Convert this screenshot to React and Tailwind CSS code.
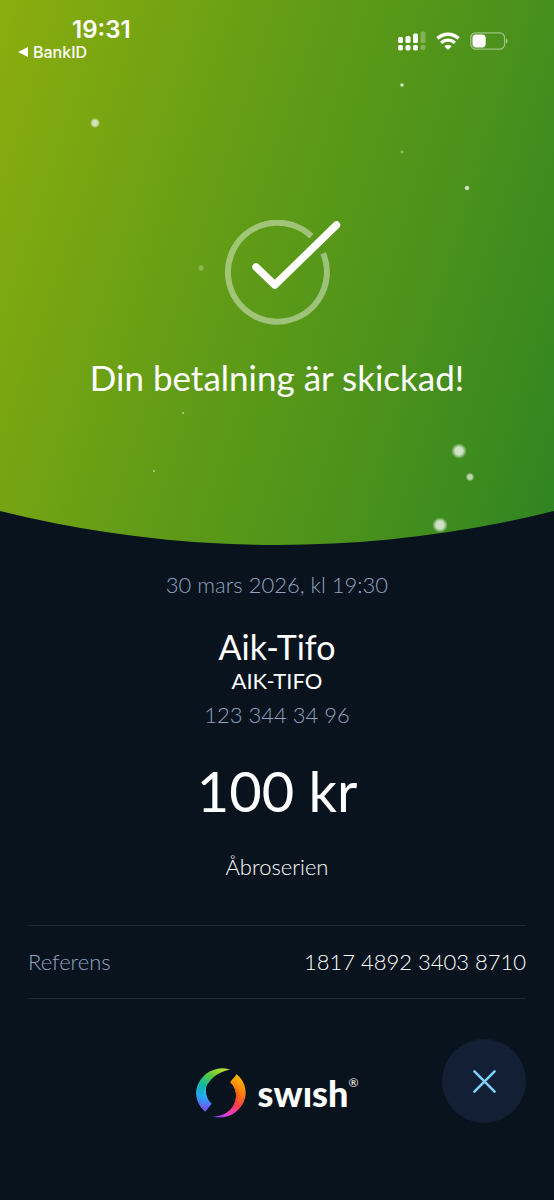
import React from 'react';

const sparkles = [
  { x: 95, y: 123, r: 4, opacity: 0.7 },
  { x: 402, y: 85, r: 1.2, opacity: 0.75 },
  { x: 402, y: 152, r: 1, opacity: 0.35 },
  { x: 467, y: 188, r: 1.8, opacity: 0.75 },
  { x: 201, y: 268, r: 2.2, opacity: 0.28 },
  { x: 183, y: 413, r: 0.3, opacity: 0.45 },
  { x: 154, y: 471, r: 0.3, opacity: 0.45 },
  { x: 459, y: 451, r: 6.5, opacity: 0.75 },
  { x: 470, y: 477, r: 3.3, opacity: 0.65 },
  { x: 440, y: 525, r: 6.5, opacity: 0.75 },
];

const Sparkles = () => (
  <svg
    className="absolute inset-0 h-full w-full"
    viewBox="0 0 554 545"
    preserveAspectRatio="xMidYMax slice"
    aria-hidden="true"
  >
    <defs>
      <radialGradient id="sparkle">
        <stop offset="0.5" stopColor="#fff" />
        <stop offset="1" stopColor="#fff" stopOpacity="0.1" />
      </radialGradient>
    </defs>
    {sparkles.map(({ x, y, r, opacity }) => (
      <circle key={`${x}-${y}`} cx={x} cy={y} r={r + 1} fill="url(#sparkle)" opacity={opacity} />
    ))}
  </svg>
);

const SignalIcon = () => (
  <svg width="28" height="20" viewBox="0 0 28 20" fill="#fff" aria-hidden="true">
    <rect x="0" y="6" width="5" height="6" rx="1.6" />
    <rect x="7.5" y="5" width="5" height="7" rx="1.6" />
    <rect x="15" y="2.5" width="5" height="9.5" rx="1.6" />
    <rect x="22.5" y="0.5" width="5" height="11.5" rx="1.6" opacity="0.28" />
    <rect x="0" y="14" width="5" height="5.5" rx="1.8" />
    <rect x="7.5" y="14" width="5" height="5.5" rx="1.8" />
    <rect x="15" y="14" width="5" height="5.5" rx="1.8" />
    <rect x="22.5" y="14" width="5" height="5" rx="2" opacity="0.28" />
  </svg>
);

const WifiIcon = () => (
  <svg width="24" height="18" viewBox="0 0 24 18" fill="none" stroke="#fff" strokeWidth="3.5" aria-hidden="true">
    <path d="M1.4 6.6a15 15 0 0 1 21.2 0" />
    <path d="M5.2 10.9a9.6 9.6 0 0 1 13.6 0" strokeWidth="3.2" />
    <path d="M12 18l-3.7-3.7a5.2 5.2 0 0 1 7.4 0z" fill="#fff" stroke="none" />
  </svg>
);

const BatteryIcon = () => (
  <svg width="38" height="18" viewBox="0 0 38 18" aria-hidden="true">
    <rect x="0.8" y="0.8" width="33.8" height="16.4" rx="5" fill="none" stroke="#fff" strokeOpacity="0.45" strokeWidth="1.3" />
    <rect x="2.5" y="2.6" width="13.2" height="12.8" rx="3.6" fill="#fff" />
    <path d="M36 6.4c2.2.9 2.2 4.3 0 5.2z" fill="#fff" opacity="0.5" />
  </svg>
);

const CheckMark = () => (
  <svg width="118" height="107" viewBox="0 0 118 107" fill="none" aria-hidden="true">
    <path d="M87.4 16.2A49.5 49.5 0 1 0 99.2 33.4" stroke="#fff" strokeOpacity="0.42" strokeWidth="6" />
    <path d="M32 47L50.8 65L112.5 5" stroke="#fff" strokeWidth="7.5" strokeLinecap="round" strokeLinejoin="round" />
  </svg>
);

const SwishMark = () => (
  <svg width="50" height="50" viewBox="0 0 150 150" aria-hidden="true">
    <defs>
      <linearGradient id="coolOuter" gradientUnits="userSpaceOnUse" x1="100" y1="0" x2="28" y2="131">
        <stop offset="0" stopColor="#e3e52c" />
        <stop offset="0.3" stopColor="#5cc83c" />
        <stop offset="0.55" stopColor="#12b9a0" />
        <stop offset="0.78" stopColor="#1fa6f0" />
        <stop offset="1" stopColor="#7450f2" />
      </linearGradient>
      <linearGradient id="coolInner" gradientUnits="userSpaceOnUse" x1="55" y1="10" x2="38" y2="120">
        <stop offset="0" stopColor="#3fc05a" />
        <stop offset="0.4" stopColor="#1fd0c8" />
        <stop offset="0.7" stopColor="#22b0f5" />
        <stop offset="1" stopColor="#6a5cf5" />
      </linearGradient>
      <linearGradient id="warmOuter" gradientUnits="userSpaceOnUse" x1="122" y1="19" x2="50" y2="150">
        <stop offset="0" stopColor="#fbb800" />
        <stop offset="0.3" stopColor="#ff7a12" />
        <stop offset="0.55" stopColor="#ff3d4d" />
        <stop offset="0.8" stopColor="#e83ad8" />
        <stop offset="1" stopColor="#6a3cf0" />
      </linearGradient>
      <linearGradient id="warmInner" gradientUnits="userSpaceOnUse" x1="112" y1="30" x2="95" y2="140">
        <stop offset="0" stopColor="#ffa800" />
        <stop offset="0.4" stopColor="#f5620c" />
        <stop offset="0.7" stopColor="#fa2f4c" />
        <stop offset="1" stopColor="#f03ac8" />
      </linearGradient>
    </defs>
    <path d="M103 5C60 -9 14 17 3 59C-4 87 8 115 28 131L47 107C27 89 24 58 40 34C54 14 78 3 103 5Z" fill="url(#coolInner)" />
    <path d="M103 5C60 -9 14 17 3 59C-4 87 8 115 28 131C5 88 33 15 103 5Z" fill="url(#coolOuter)" />
    <path d="M47 145C90 159 136 133 147 91C154 63 142 35 122 19L103 43C123 61 126 92 110 116C96 136 72 147 47 145Z" fill="url(#warmOuter)" />
    <path d="M103 43C123 61 126 92 110 116C133 98 134 66 112 31Z" fill="url(#warmInner)" />
  </svg>
);

const StatusBar = () => (
  <header className="relative flex items-start justify-between pt-4 pr-[46px] pl-4 font-['Inter',sans-serif] text-white">
    <div>
      <div className="pl-14 text-2xl leading-7 font-semibold">19:31</div>
      <a href="#bankid" className="flex items-center gap-1 pl-px text-base leading-4 font-medium">
        <svg width="12" height="10" viewBox="0 0 12 10" fill="#fff" aria-hidden="true">
          <path d="M1 5L11 0V10z" />
        </svg>
        BankID
      </a>
    </div>
    <div className="flex items-center gap-[10px] pt-[15px]">
      <SignalIcon />
      <WifiIcon />
      <BatteryIcon />
    </div>
  </header>
);

const Confirmation = () => (
  <section className="relative bg-[linear-gradient(108deg,#8bad0e_0%,#5f9b17_45%,#4a911c_72%,#2f8422_100%)] pb-[150px] [clip-path:circle(1145px_at_50%_calc(100%-1145px))]">
    <Sparkles />
    <StatusBar />
    <div className="relative flex flex-col items-center pt-40">
      <div className="pl-3">
        <CheckMark />
      </div>
      <h1 className="pt-8 text-[35px] leading-9">Din betalning är skickad!</h1>
    </div>
  </section>
);

const Receipt = () => (
  <section className="flex flex-col items-center pt-[26px]">
    <p className="text-[22px] leading-7 font-light text-[#90a3c0]">30 mars 2026, kl 19:30</p>
    <h2 className="pt-7 text-[34px] leading-10">Aik-Tifo</h2>
    <p className="text-[22px] leading-7">AIK-TIFO</p>
    <p className="pt-[6px] text-[22px] leading-7 font-light text-[#90a3c0]">123 344 34 96</p>
    <p className="pt-[30px] text-[56px] leading-16">100 kr</p>
    <p className="pt-[30px] text-[22px] leading-7 font-light">Åbroserien</p>
  </section>
);

const App = () => {
  return (
    <main className="min-h-screen bg-[#08131d] font-['Lato',sans-serif] text-white">
      <Confirmation />
      <Receipt />
      <div className="px-7 pt-11">
        <dl className="flex items-center justify-between border-y border-[#1c2935] py-5 text-[22px] leading-8 font-light">
          <dt className="text-[#90a3c0]">Referens</dt>
          <dd>1817 4892 3403 8710</dd>
        </dl>
        <footer className="grid grid-cols-[1fr_auto_1fr] items-center pt-10">
          <div className="col-start-2 flex items-center gap-3 pt-6">
            <SwishMark />
            <div className="flex items-start" aria-label="swish">
              <span className="text-4xl leading-10 font-black">swısh</span>
              <span className="text-xs leading-5">®</span>
            </div>
          </div>
          <button
            type="button"
            aria-label="Stäng"
            className="flex size-21 items-center justify-center justify-self-end rounded-full bg-[#131f34]"
          >
            <svg width="23" height="23" viewBox="0 0 24 24" stroke="#80d2fa" strokeWidth="2.6" strokeLinecap="round" aria-hidden="true">
              <path d="M1.5 1.5l21 21M22.5 1.5l-21 21" />
            </svg>
          </button>
        </footer>
      </div>
    </main>
  );
};

export default App;
